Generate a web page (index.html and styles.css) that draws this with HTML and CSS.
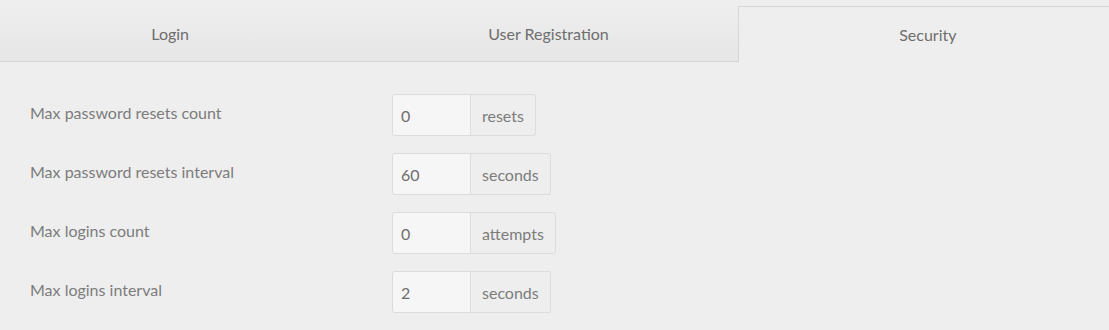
FILE: index.html
```html
<!DOCTYPE html>
<html lang="en">

<head>
    <meta charset="UTF-8">
    <meta name="viewport" content="width=device-width, initial-scale=1.0">
    <title>Settings</title>
    <link rel="stylesheet" href="styles.css">
</head>

<body>

    <nav class="tabs">
        <div class="tab">Login</div>
        <div class="tab">User Registration</div>
        <div class="tab active">Security</div>
    </nav>

    <form class="settings">
        <div class="row">
            <label class="row-label">Max password resets count</label>
            <div class="input-group">
                <input class="field" type="text" value="0">
                <span class="addon">resets</span>
            </div>
        </div>
        <div class="row">
            <label class="row-label">Max password resets interval</label>
            <div class="input-group">
                <input class="field" type="text" value="60">
                <span class="addon">seconds</span>
            </div>
        </div>
        <div class="row">
            <label class="row-label">Max logins count</label>
            <div class="input-group">
                <input class="field" type="text" value="0">
                <span class="addon">attempts</span>
            </div>
        </div>
        <div class="row">
            <label class="row-label">Max logins interval</label>
            <div class="input-group">
                <input class="field" type="text" value="2">
                <span class="addon">seconds</span>
            </div>
        </div>
    </form>

</body>

</html>
```

FILE: styles.css
```css
* {
    margin: 0;
    padding: 0;
    box-sizing: border-box;
    font-family: 'Lato', 'Liberation Sans', sans-serif;
}

body {
    background: #eeeeee;
    color: #7c7c7c;
    overflow: hidden;
}

.tabs {
    display: flex;
    align-items: flex-end;
    margin-left: -19px;
    width: 1137px;
}

.tab {
    flex: 1;
    height: 62px;
    padding-top: 6px;
    display: flex;
    align-items: center;
    justify-content: center;
    font-size: 16px;
    color: #6e6e6e;
    background: linear-gradient(#efefef, #e6e6e6);
    border-bottom: 1px solid #d4d4d4;
}

.tab.active {
    height: 56px;
    padding-top: 0;
    padding-bottom: 1px;
    background: #eeeeee;
    border-bottom: none;
    border-top: 1px solid #d6d6d6;
    border-left: 1px solid #d6d6d6;
    border-right: 1px solid #d6d6d6;
}

.settings {
    padding: 32px 30px;
    display: flex;
    flex-direction: column;
    gap: 17px;
}

.row {
    display: flex;
    align-items: center;
}

.row-label {
    width: 362px;
    font-size: 16px;
    color: #7c7c7c;
    margin-top: -6px;
}

.input-group {
    display: flex;
    height: 42px;
}

.field {
    width: 79px;
    height: 42px;
    padding: 0 8px;
    font-size: 16px;
    color: #6e6e6e;
    background: #f6f6f6;
    border: 1px solid #dcdcdc;
    border-radius: 3px 0 0 3px;
    outline: none;
}

.addon {
    display: flex;
    align-items: center;
    padding: 0 11px;
    font-size: 16px;
    color: #7c7c7c;
    background: #eeeeee;
    border: 1px solid #dcdcdc;
    border-left: none;
    border-radius: 0 3px 3px 0;
}
```
